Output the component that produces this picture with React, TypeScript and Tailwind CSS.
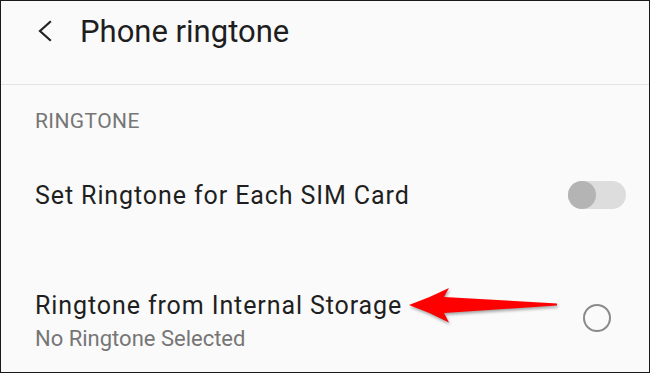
import React from "react";

export default function App() {
  return (
    <div
      className="relative w-[650px] h-[373px] border border-[#1a1a1a] bg-[#fafafa] overflow-hidden"
      style={{ fontFamily: "Roboto, 'Liberation Sans', sans-serif" }}
    >
      {/* Header */}
      <div className="h-[84px] border-b border-[#e2e2e2] flex items-start pt-[15px]">
        <div className="w-[79px] flex pl-[36px] pt-[4px]">
          <svg width="16" height="22" viewBox="0 0 16 22" fill="none">
            <path d="M13 2 L3 11 L13 20" stroke="#222" strokeWidth="2.2" strokeLinecap="square" />
          </svg>
        </div>
        <div className="text-[31px] leading-[31px] text-[#1e1e1e]">Phone ringtone</div>
      </div>

      {/* Section */}
      <div className="pl-[34px] pr-[23px]">
        <div className="pt-[26px] text-[21px] leading-[21px] tracking-[0.4px] text-[#767676]">RINGTONE</div>

        <div className="mt-[49px] h-[28px] flex items-center justify-between">
          <div className="text-[25px] leading-[25px] tracking-[0.9px] text-[#1f1f1f]">Set Ringtone for Each SIM Card</div>
          <div className="relative w-[58px] h-[28px] rounded-full bg-[#dddddd]">
            <div className="absolute left-0 top-0 w-[28px] h-[28px] rounded-full bg-[#b4b4b4]" />
          </div>
        </div>

        <div className="mt-[84px] flex items-start justify-between">
          <div className="flex flex-col">
            <div className="text-[25px] leading-[25px] tracking-[0.9px] text-[#1f1f1f]">Ringtone from Internal Storage</div>
            <div className="mt-[10px] text-[22px] leading-[22px] text-[#767676]">No Ringtone Selected</div>
          </div>
          <div className="w-[58px] flex justify-center pt-[11px]">
            <div className="w-[28px] h-[28px] rounded-full border-2 border-[#8a8a8a]" />
          </div>
        </div>
      </div>

      {/* Red arrow annotation */}
      <svg
        className="absolute left-[404px] top-[283px]"
        width="160"
        height="44"
        viewBox="404 283 160 44"
        style={{ filter: "drop-shadow(1px 2px 1.5px rgba(0,0,0,0.35))" }}
      >
        <path
          d="M408 304 Q428 297 448 287 L443 296 L556 302.5 L556 304.5 L443 312 L448 321.5 Q428 311 408 304 Z"
          fill="#ff0000"
        />
      </svg>
    </div>
  );
}
